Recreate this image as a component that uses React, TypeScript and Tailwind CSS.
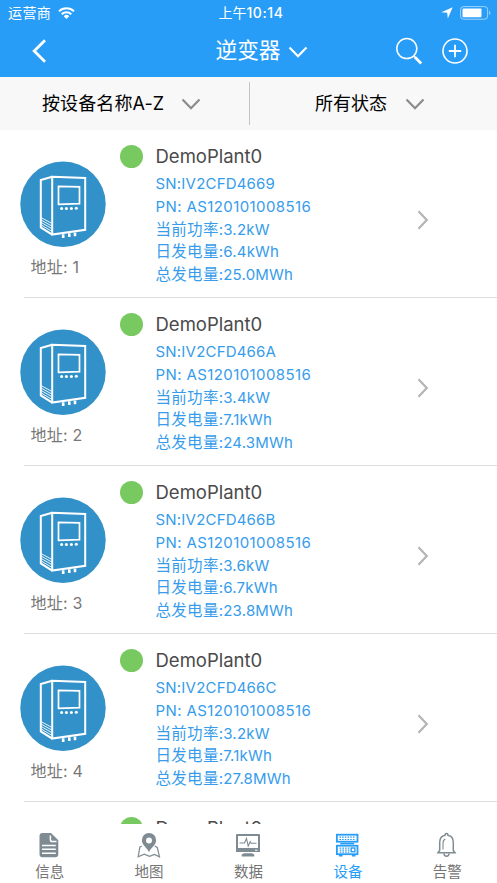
interface Device {
  address: number;
  name: string;
  sn: string;
  pn: string;
  power: string;
  daily: string;
  total: string;
}

const devices: Device[] = [
  { address: 1, name: "DemoPlant0", sn: "IV2CFD4669", pn: "AS120101008516", power: "3.2kW", daily: "6.4kWh", total: "25.0MWh" },
  { address: 2, name: "DemoPlant0", sn: "IV2CFD466A", pn: "AS120101008516", power: "3.4kW", daily: "7.1kWh", total: "24.3MWh" },
  { address: 3, name: "DemoPlant0", sn: "IV2CFD466B", pn: "AS120101008516", power: "3.6kW", daily: "6.7kWh", total: "23.8MWh" },
  { address: 4, name: "DemoPlant0", sn: "IV2CFD466C", pn: "AS120101008516", power: "3.2kW", daily: "7.1kWh", total: "27.8MWh" },
  { address: 5, name: "DemoPlant0", sn: "IV2CFD466D", pn: "AS120101008516", power: "3.2kW", daily: "7.1kWh", total: "25.1MWh" },
];

function ChevronDown({ className }: { className?: string }) {
  return (
    <svg viewBox="0 0 20 12" fill="none" stroke="currentColor" strokeWidth="2.2" className={className}>
      <path d="M1.5 1.5 10 10.2l8.5-8.7" />
    </svg>
  );
}

function StatusBar() {
  return (
    <div className="grid h-[25px] grid-cols-3 items-center pl-2 pr-[6px] text-[14px] leading-none">
      <div className="flex items-center gap-[7px]">
        <span className="tracking-[0.4px]">运营商</span>
        <svg viewBox="0 0 17 12" className="h-3 w-[17px]" fill="none" stroke="currentColor" strokeWidth="2">
          <path d="M1 4.4a10.8 10.8 0 0 1 15 0" />
          <path d="M3.7 7.2a7 7 0 0 1 9.6 0" />
          <path d="M8.5 12 5.7 9.2a4 4 0 0 1 5.6 0z" fill="currentColor" stroke="none" />
        </svg>
      </div>
      <div className="whitespace-nowrap pl-[3px] text-center font-medium">
        <span className="font-normal">上午</span>
        <span className="tracking-[0.6px]">10:14</span>
      </div>
      <div className="flex items-center justify-end gap-[7px]">
        <svg viewBox="0 0 12 12" className="size-3" fill="currentColor">
          <path d="M11.7.3 6.8 11.5 6.2 5.8.3 5.3z" />
        </svg>
        <svg viewBox="0 0 31 14" className="h-[14px] w-[31px]" fill="none">
          <rect x=".6" y=".6" width="27" height="12.6" rx="3" stroke="white" strokeOpacity=".55" />
          <rect x="2.5" y="2.5" width="19" height="8.8" rx="1" fill="white" />
          <path d="M29.2 4.8c1.6.6 1.6 3.6 0 4.2z" fill="white" fillOpacity=".6" />
        </svg>
      </div>
    </div>
  );
}

function Header() {
  return (
    <header className="h-[77px] shrink-0 bg-[#289df8] text-white">
      <StatusBar />
      <div className="grid h-[52px] grid-cols-[1fr_auto_1fr] items-center">
        <svg viewBox="0 0 14 24" className="ml-8 h-6 w-[14px]" fill="none" stroke="currentColor" strokeWidth="2.8">
          <path d="M13 1.2 2.2 12 13 22.8" />
        </svg>
        <div className="flex items-center gap-[7px] pl-[26px]">
          <h1 className="text-[21.7px] leading-none">逆变器</h1>
          <ChevronDown className="mt-[2px] h-3 w-5" />
        </div>
        <div className="flex items-center justify-end gap-[19px] pr-[29px]">
          <svg viewBox="0 0 28 28" className="-mt-px size-7" fill="none" stroke="currentColor">
            <circle cx="11.8" cy="11.6" r="10" strokeWidth="1.5" />
            <path d="m18.6 18.7 1.8 1.9" strokeWidth="1.7" />
            <path d="m20 20.2 6.2 6.3" strokeWidth="2.8" />
          </svg>
          <svg viewBox="0 0 26 26" className="size-[26px]" fill="none" stroke="currentColor" strokeWidth="1.6">
            <circle cx="13" cy="13" r="12" />
            <path d="M6.8 13h12.4M13 6.8v12.4" strokeWidth="1.8" />
          </svg>
        </div>
      </div>
    </header>
  );
}

function Filters() {
  return (
    <div className="grid h-[53px] shrink-0 grid-cols-[250px_1fr] items-center bg-[#f8f8f8] text-[18px] text-black">
      <div className="flex h-[43px] items-center gap-[17px] border-r border-[#c4c4c4] pl-[42px]">
        <span className="tracking-[0.1px]">按设备名称A-Z</span>
        <ChevronDown className="h-3 w-5 text-[#8b8b8b]" />
      </div>
      <div className="flex h-[43px] items-center gap-[18px] pl-[65px]">
        <span>所有状态</span>
        <ChevronDown className="h-3 w-5 text-[#8b8b8b]" />
      </div>
    </div>
  );
}

function InverterIcon() {
  return (
    <svg viewBox="0 0 86 86" className="size-[86px]" fill="none" stroke="white">
      <circle cx="43" cy="43.2" r="42.7" fill="#3391ca" stroke="none" />
      <path d="M32.2 15.8 65.2 17v51.8l-33 4.8z" strokeWidth="2" />
      <path d="M32.2 15.8 20.8 19v47.4l11.4 7.2" strokeWidth="2" />
      <path d="m38.5 25.3 21 .6v16.8l-21 .6z" strokeWidth="1.7" />
      <path d="m21 56.6 10.4 5.6M21 59l10.4 5.8M21 61.4l10.4 6M21 63.8l10.4 6.3" strokeWidth=".9" />
      <g fill="white" stroke="none">
        <circle cx="41.6" cy="47.6" r="1.5" />
        <circle cx="46.4" cy="47.5" r="1.5" />
        <circle cx="51.4" cy="47.4" r="1.5" />
        <circle cx="56.3" cy="47.2" r="1.5" />
      </g>
      <path d="M43.2 73.2v3.7M49.3 72.3v3.8M55 71.6v3.6" strokeWidth="2.6" />
    </svg>
  );
}

function Reading({ label, value }: { label: string; value: string }) {
  return (
    <div className="flex h-[22.75px] items-center">
      <span className="text-[15.5px] tracking-[0.3px]">{label}</span>
      <span>:{value}</span>
    </div>
  );
}

function DeviceRow({ device }: { device: Device }) {
  return (
    <li className="h-[168px] shrink-0 pl-6">
      <div className="-ml-6 flex h-[167px]">
        <div className="flex w-[120px] shrink-0 flex-col pl-5 pt-[31px]">
          <InverterIcon />
          <span className="mt-[9px] pl-[10.5px] text-[16px] leading-[22px] tracking-[0.2px] text-[#777]">
            地址: {device.address}
          </span>
        </div>
        <span className="mt-[15px] size-[23px] shrink-0 rounded-full bg-[#78c960]" />
        <div className="ml-[12.5px] flex-1 pt-[14px]">
          <div className="text-[18.5px] leading-[24px] text-[#4a4a4a]">{device.name}</div>
          <div className="mt-[5.2px] text-[15px] leading-[22.75px] tracking-[0.2px] text-[#369ceb]">
            <div>SN:{device.sn}</div>
            <div className="tracking-[0.4px]">PN: {device.pn}</div>
            <Reading label="当前功率" value={device.power} />
            <Reading label="日发电量" value={device.daily} />
            <Reading label="总发电量" value={device.total} />
          </div>
        </div>
        <svg viewBox="0 0 12 20" className="mr-[68px] mt-[80px] h-5 w-3" fill="none" stroke="#b4b4b4" strokeWidth="2.2">
          <path d="m1.5 1.2 8.3 8.8-8.3 8.8" />
        </svg>
      </div>
      <div className="h-px bg-[#dedede]" />
    </li>
  );
}

const tabs = [
  {
    label: "信息",
    icon: (
      <svg viewBox="0 0 26 26" className="size-[26px]">
        <path d="M5.5 1H14l7.3 7.2v14.1a3 3 0 0 1-3 3H5.5a3 3 0 0 1-3-3V4a3 3 0 0 1 3-3z" fill="currentColor" />
        <path d="M13.4 3.5v4.2c0 1 .8 1.8 1.8 1.8h4.3M5 13.5h13.8M5 17.3h13.8M5 21.2h13.8" stroke="white" strokeWidth="1.5" fill="none" />
      </svg>
    ),
  },
  {
    label: "地图",
    icon: (
      <svg viewBox="0 0 26 26" className="size-[26px]" fill="none">
        <path d="M5.8 14.2 3.9 15 2.2 24.8l6-2.7 5.3 2.3 5-2 5 2.4-2.2-9.3-2.6-1.6" stroke="currentColor" strokeWidth="1.2" />
        <path d="M13 1a7.1 7.1 0 0 0-7.1 7.2c0 5.2 5 7 7.1 12 2-5 7.1-6.8 7.1-12A7.1 7.1 0 0 0 13 1zm0 4.4a3 3 0 1 1 0 6 3 3 0 0 1 0-6z" fill="currentColor" />
      </svg>
    ),
  },
  {
    label: "数据",
    icon: (
      <svg viewBox="0 0 26 26" className="size-[26px]" fill="none">
        <path d="M2 2h22a1 1 0 0 1 1 1v17H1V3a1 1 0 0 1 1-1zm1 2v12h20V4z" fill="currentColor" fillRule="evenodd" />
        <path d="M4.5 11h5l2-4.5L13.2 14l2-4.3 1 1.6h5.3" stroke="currentColor" strokeWidth="1.1" />
        <path d="M9 21.2h8l2.3 1.3v2H6.7v-2z" fill="currentColor" />
        <path d="M20 18.2h2.5" stroke="white" />
      </svg>
    ),
  },
  {
    label: "设备",
    active: true,
    icon: (
      <svg viewBox="0 0 26 26" className="size-[26px]" fill="none" stroke="currentColor">
        <rect x="1.9" y="2.7" width="20.6" height="7" strokeWidth="1.8" />
        <path d="M4.4 5.2h15.8M4.4 7.5h15.8" strokeWidth="1.2" strokeDasharray="1.6 1.1" />
        <path d="M5.2 11.6h14" strokeWidth="1.6" />
        <rect x="1.9" y="13.7" width="20.6" height="8.5" strokeWidth="1.8" />
        <path d="M4.7 16.1h9.8M4.7 18.1h9.8M4.7 20.1h9.8" strokeWidth="1.1" strokeDasharray="1.6 1.1" />
        <rect x="16.2" y="16" width="3.7" height="3.7" strokeWidth="1.4" />
        <path d="M3.9 23.6h3.6M16.9 23.6h3.6" strokeWidth="2" />
      </svg>
    ),
  },
  {
    label: "告警",
    icon: (
      <svg viewBox="0 0 26 26" className="size-[26px]" fill="none" stroke="currentColor" strokeWidth="1.5">
        <path d="M11 3.3C11 1 14 1 14 3.3c3.6.7 5.3 3.7 5.3 7.2v7.9l1.7 2.3H4l1.7-2.3v-7.9C5.7 7 7.4 4 11 3.3z" />
        <path d="M9 17.5v-6.3c0-2 .8-3.5 2.3-4.2" strokeWidth="1.1" />
        <path d="M10 21.5c0 3.6 5 3.6 5 0" />
      </svg>
    ),
  },
];

function TabBar() {
  return (
    <nav className="grid h-[59px] shrink-0 grid-cols-5 bg-white">
      {tabs.map((tab) => (
        <div
          key={tab.label}
          className={
            tab.active
              ? "flex flex-col items-center pt-2 text-[#289df8]"
              : "flex flex-col items-center pt-2 text-[#7f8b92]"
          }
        >
          {tab.icon}
          <span className={tab.active ? "mt-1 text-[14.5px] leading-[19px]" : "mt-1 text-[14.5px] leading-[19px] text-[#747474]"}>
            {tab.label}
          </span>
        </div>
      ))}
    </nav>
  );
}

export default function App() {
  return (
    <div className="flex h-[883px] w-[497px] flex-col overflow-hidden bg-white font-['Inter','Noto_Sans_CJK_SC',sans-serif]">
      <Header />
      <Filters />
      <ul className="flex min-h-0 flex-1 flex-col overflow-hidden">
        {devices.map((device) => (
          <DeviceRow key={device.address} device={device} />
        ))}
      </ul>
      <TabBar />
    </div>
  );
}
